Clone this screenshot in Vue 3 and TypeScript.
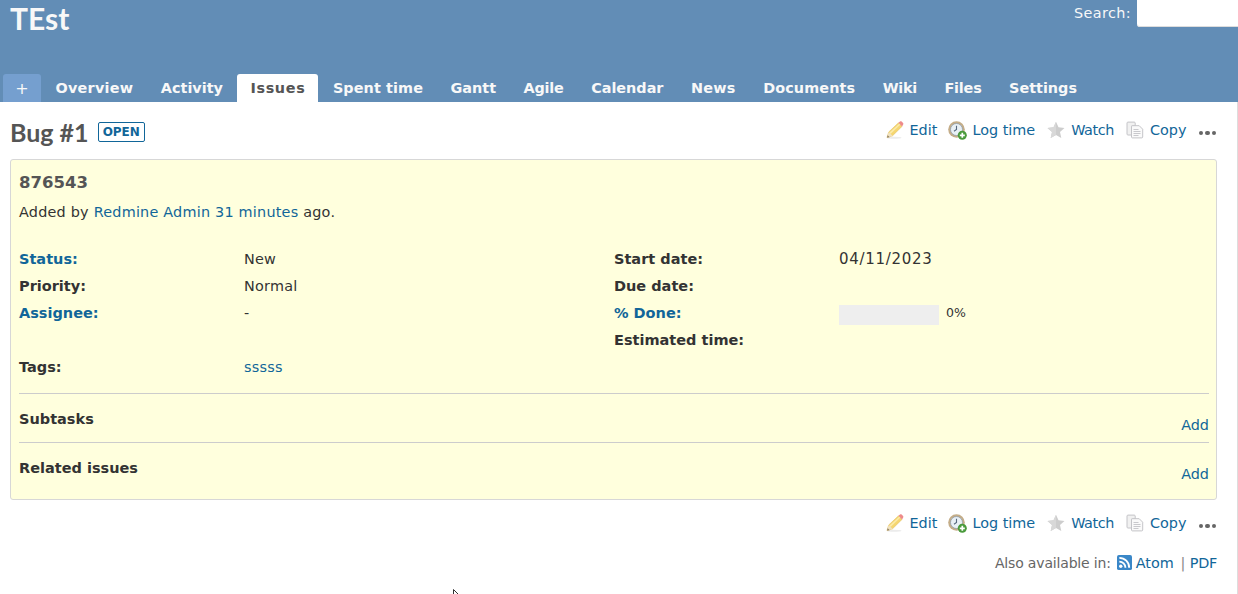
<script setup lang="ts">
const tabs = [
  { name: 'Overview', ls: 0.25 },
  { name: 'Activity', ls: 0 },
  { name: 'Issues', ls: 0.65 },
  { name: 'Spent time', ls: 0.1 },
  { name: 'Gantt', ls: 0 },
  { name: 'Agile', ls: -0.2 },
  { name: 'Calendar', ls: 0 },
  { name: 'News', ls: 0.25 },
  { name: 'Documents', ls: 0.11 },
  { name: 'Wiki', ls: -0.25 },
  { name: 'Files', ls: -0.2 },
  { name: 'Settings', ls: 0 },
]
const leftAttrs = [
  { label: 'Status:', value: 'New', labelLink: true, valueLink: false },
  { label: 'Priority:', value: 'Normal', labelLink: false, valueLink: false },
  { label: 'Assignee:', value: '-', labelLink: true, valueLink: false },
  { label: '', value: '', labelLink: false, valueLink: false },
  { label: 'Tags:', value: 'sssss', labelLink: false, valueLink: true },
]
const toolbars = ['top', 'bottom']
</script>

<template>
  <div class="page">
    <header class="header">
      <div class="top">
        <h1 class="title">TEst</h1>
        <div class="search">
          <label class="search-label">Search:</label>
          <span class="search-box"></span>
        </div>
      </div>
      <nav class="tabs">
        <a class="tab new">+</a>
        <a
          v-for="t in tabs"
          :key="t.name"
          class="tab"
          :class="{ selected: t.name === 'Issues' }"
          :style="{ letterSpacing: t.ls + 'px' }"
        >{{ t.name }}</a>
      </nav>
    </header>

    <main class="content">
      <template v-for="bar in toolbars" :key="bar">
        <div v-if="bar === 'top'" class="head-row">
          <div class="heading">
            <h2 class="bug">Bug #1</h2>
            <span class="badge">OPEN</span>
          </div>
          <div class="actions">
            <a class="action">
              <svg class="ic" viewBox="0 0 18 18"><ellipse cx="8" cy="16.800" rx="7.500" ry="1" fill="#ececec"/><path d="M1 16.500 2.700 11 12.500 1.800l3.500 3.600L6.500 14.800z" fill="#f5d670" stroke="#e3bf63" stroke-width=".6"/><path d="M3.500 11.500 13.500 2.500l1 1-10 9.500z" fill="#fbeaa8"/><path d="M12.500 1.800 14 .6c.5-.4 1.100-.4 1.600 0l1.500 1.500c.4.500.4 1.100 0 1.600L16 5.400z" fill="#ee8b8b"/><path d="M1 16.500 2.700 11l3.800 3.800z" fill="#f0e2c2"/><path d="M1 16.500 1.700 14.300l2 2z" fill="#8a7a60"/></svg>
              Edit
            </a>
            <a class="action">
              <svg class="ic clock" viewBox="0 0 19 19"><circle cx="8.500" cy="8.500" r="8.300" fill="#c4ad88"/><circle cx="8.500" cy="8.500" r="6" fill="#e8f0f6" stroke="#8798ab" stroke-width=".7"/><path d="M8.500 4.800v3.700L6 10.200" fill="none" stroke="#56687e" stroke-width="1.100"/><circle cx="14.300" cy="14.300" r="4.500" fill="#4a9a3c"/><path d="M14.300 11.800v5M11.800 14.300h5" stroke="#fff" stroke-width="1.700"/></svg>
              Log time
            </a>
            <a class="action watch">
              <svg class="ic" viewBox="0 0 18 18"><path d="M9 .8 11.500 6.300l6 .7-4.500 4 1.300 6L9 14l-5.300 3 1.300-6L.5 7l6-.7z" fill="#cdcdcd"/><path d="M9 .8V14l-5.300 3 1.300-6L.5 7l6-.7z" fill="#d8d8d8"/></svg>
              Watch
            </a>
            <a class="action">
              <svg class="ic" viewBox="0 0 18 18"><path d="M1 2c0-.5.400-.9.900-.9h6.400c.5 0 .9.400.9.900v3H5.500v9H1.900c-.5 0-.9-.4-.9-.9z" fill="#f1f1f1" stroke="#c4c4c8"/><path d="M5.500 5.600c0-.5.400-.9.900-.9h6.800l3.500 3.500v7.800c0 .5-.4.900-.9.900H6.400c-.5 0-.9-.4-.9-.9z" fill="#fafafa" stroke="#c4c4c8"/><path d="M7.500 8.500h5M7.500 10.500h7M7.500 12.500h7M7.500 14.500h5" stroke="#c9c9cd" stroke-width="1"/></svg>
              Copy
            </a>
            <span class="more"><i></i><i></i><i></i></span>
          </div>
        </div>

        <section v-if="bar === 'top'" class="issue">
          <h3 class="subject">876543</h3>
          <p class="author">Added by <a>Redmine Admin</a> <a>31 minutes</a> ago.</p>
          <div class="attrs">
            <div class="col">
              <div v-for="(a, i) in leftAttrs" :key="i" class="attr">
                <span class="lbl" :class="{ link: a.labelLink }">{{ a.label }}</span>
                <span class="val" :class="{ link: a.valueLink }">{{ a.value }}</span>
              </div>
            </div>
            <div class="col">
              <div class="attr"><span class="lbl">Start date:</span><span class="val date">04/11/2023</span></div>
              <div class="attr"><span class="lbl">Due date:</span><span class="val"></span></div>
              <div class="attr">
                <span class="lbl link">% Done:</span>
                <span class="val progress"><span class="bar"></span><span class="pct">0%</span></span>
              </div>
              <div class="attr"><span class="lbl">Estimated time:</span><span class="val"></span></div>
            </div>
          </div>
          <div class="related first">
            <span class="rel-title">Subtasks</span>
            <a class="add">Add</a>
          </div>
          <div class="related">
            <span class="rel-title">Related issues</span>
            <a class="add">Add</a>
          </div>
        </section>

        <div v-if="bar === 'bottom'" class="actions bottom">
          <a class="action">
            <svg class="ic" viewBox="0 0 18 18"><ellipse cx="8" cy="16.800" rx="7.500" ry="1" fill="#ececec"/><path d="M1 16.500 2.700 11 12.500 1.800l3.500 3.600L6.500 14.800z" fill="#f5d670" stroke="#e3bf63" stroke-width=".6"/><path d="M3.500 11.500 13.500 2.500l1 1-10 9.500z" fill="#fbeaa8"/><path d="M12.500 1.800 14 .6c.5-.4 1.100-.4 1.600 0l1.500 1.500c.4.500.4 1.100 0 1.600L16 5.400z" fill="#ee8b8b"/><path d="M1 16.500 2.700 11l3.800 3.800z" fill="#f0e2c2"/><path d="M1 16.500 1.700 14.300l2 2z" fill="#8a7a60"/></svg>
            Edit
          </a>
          <a class="action">
            <svg class="ic clock" viewBox="0 0 19 19"><circle cx="8.500" cy="8.500" r="8.300" fill="#c4ad88"/><circle cx="8.500" cy="8.500" r="6" fill="#e8f0f6" stroke="#8798ab" stroke-width=".7"/><path d="M8.500 4.800v3.700L6 10.200" fill="none" stroke="#56687e" stroke-width="1.100"/><circle cx="14.300" cy="14.300" r="4.500" fill="#4a9a3c"/><path d="M14.300 11.800v5M11.800 14.300h5" stroke="#fff" stroke-width="1.700"/></svg>
            Log time
          </a>
          <a class="action watch">
            <svg class="ic" viewBox="0 0 18 18"><path d="M9 .8 11.500 6.300l6 .7-4.500 4 1.300 6L9 14l-5.300 3 1.300-6L.5 7l6-.7z" fill="#cdcdcd"/><path d="M9 .8V14l-5.300 3 1.300-6L.5 7l6-.7z" fill="#d8d8d8"/></svg>
            Watch
          </a>
          <a class="action">
            <svg class="ic" viewBox="0 0 18 18"><path d="M1 2c0-.5.400-.9.900-.9h6.400c.5 0 .9.400.9.900v3H5.500v9H1.900c-.5 0-.9-.4-.9-.9z" fill="#f1f1f1" stroke="#c4c4c8"/><path d="M5.500 5.600c0-.5.400-.9.900-.9h6.800l3.500 3.500v7.800c0 .5-.4.900-.9.900H6.400c-.5 0-.9-.4-.9-.9z" fill="#fafafa" stroke="#c4c4c8"/><path d="M7.500 8.500h5M7.500 10.500h7M7.500 12.500h7M7.500 14.500h5" stroke="#c9c9cd" stroke-width="1"/></svg>
            Copy
          </a>
          <span class="more"><i></i><i></i><i></i></span>
        </div>
      </template>

      <p class="other">
        <span class="also">Also available in:</span>
        <svg class="rss" viewBox="0 0 16 16"><rect width="16" height="16" rx="2" fill="#3a87c8"/><circle cx="4" cy="12" r="1.800" fill="#fff"/><path d="M2.500 7a6.500 6.500 0 0 1 6.500 6.500M2.500 3a10.500 10.500 0 0 1 10.500 10.500" fill="none" stroke="#fff" stroke-width="2"/></svg>
        <a>Atom</a> <span class="sep">|</span> <a class="pdf">PDF</a>
      </p>
    </main>
    <svg class="cursor" viewBox="0 0 8 6"><path d="M.5.500V6M.5.500 6 6" fill="none" stroke="#333" stroke-width="1"/></svg>
  </div>
</template>

<style scoped>
.page {
  position: relative;
  width: 1238px;
  height: 594px;
  overflow: hidden;
  background: #fff;
  font-family: "DejaVu Sans", Verdana, sans-serif;
  font-size: 14.4px;
  color: #333;
}
a { color: #169; text-decoration: none; }
.link { color: #169; }
.header {
  height: 102px;
  background: #628db6;
  color: #f8f8f8;
  display: flex;
  flex-direction: column;
  justify-content: space-between;
}
.top {
  display: flex;
  justify-content: space-between;
  align-items: flex-start;
}
.title {
  margin: 0 0 0 10px;
  font-family: Lato, "Open Sans", sans-serif;
  font-size: 30px;
  font-weight: 700;
  line-height: 36px;
  color: #f8f8f8;
}
.search {
  display: flex;
  align-items: flex-start;
  gap: 6px;
}
.search-label { font-size: 14.4px; line-height: 26px; letter-spacing: .4px; }
.search-box {
  width: 101px;
  height: 27px;
  background: #fff;
  border-radius: 0 0 0 3px;
  box-shadow: inset 0 -1px 0 #ddd;
}
.tabs {
  display: flex;
  align-items: flex-end;
  padding-left: 3px;
  gap: 1.500px;
}
.tab {
  height: 28px;
  line-height: 29px;
  padding: 0 13px;
  font-size: 14.4px;
  font-weight: 700;
  color: #f8f8f8;
  border-radius: 3px 3px 0 0;
  white-space: nowrap;
}
.tab.new {
  width: 38px;
  padding: 0;
  text-align: center;
  background: #759fcf;
  font-weight: 400;
  font-size: 16px;
}
.tab.selected { background: #fff; color: #555; }
.content {
  height: 492px;
  box-sizing: border-box;
  padding: 0 20px 0 10px;
  border-right: 1px solid #ddd;
}
.head-row {
  height: 57px;
  display: flex;
  justify-content: space-between;
  align-items: flex-start;
}
.heading {
  display: flex;
  align-items: center;
  gap: 9px;
  height: 30px;
  margin-top: 15px;
}
.bug {
  margin: 0;
  font-family: Lato, "Open Sans", sans-serif;
  font-size: 25px;
  font-weight: 700;
  color: #555;
}
.badge {
  height: 18px;
  line-height: 18px;
  padding: 0 4px;
  border: 1px solid #169;
  border-radius: 2px;
  color: #169;
  font-size: 12px;
  font-weight: 700;
  box-sizing: content-box;
}
.actions {
  display: flex;
  align-items: center;
  height: 20px;
  margin-top: 18px;
  margin-right: 1px;
}
.action {
  display: flex;
  align-items: center;
  gap: 6px;
  margin-right: 12px;
  white-space: nowrap;
}
.action:first-child { margin-right: 11px; }
.watch { letter-spacing: -.4px; }
.ic { width: 18px; height: 18px; flex: none; }
.clock { width: 19px; height: 19px; margin-right: -1px; }
.more { display: flex; gap: 2px; margin: 6px 0 0 0; }
.more i { width: 4.500px; height: 4.500px; border-radius: 50%; background: #666; }
.issue {
  height: 341px;
  box-sizing: border-box;
  background: #ffd;
  border: 1px solid #d7d7d7;
  border-radius: 3px;
  padding: 0 7px 0 8px;
}
.subject {
  margin: 0;
  padding-top: 12px;
  font-size: 16.500px;
  line-height: 22px;
  font-weight: 700;
  color: #555;
}
.author { margin: 8px 0 0; line-height: 20px; letter-spacing: .22px; }
.attrs {
  display: grid;
  grid-template-columns: 595px 1fr;
  margin-top: 25px;
}
.attr {
  display: grid;
  grid-template-columns: 225px 1fr;
  height: 27px;
  line-height: 25px;
}
.lbl { font-weight: 700; font-size: 14.500px; }
.val { letter-spacing: .25px; }
.date { font-size: 15px; letter-spacing: .7px; }
.progress { display: flex; align-items: center; gap: 7px; letter-spacing: 0; }
.bar { width: 100px; height: 20px; background: #eee; display: block; }
.pct { font-size: 12.500px; line-height: 14px; margin-top: -4px; }
.related {
  position: relative;
  border-top: 1px solid #ccc;
  height: 48px;
}
.related.first { margin-top: 11px; }
.rel-title {
  display: block;
  padding-top: 15px;
  line-height: 21px;
  font-weight: 700;
  font-size: 14.500px;
}
.add {
  position: absolute;
  right: 0;
  top: 21px;
  line-height: 20px;
}
.bottom {
  justify-content: flex-end;
  margin-top: 13px;
}
.other {
  margin: 20px 0 0;
  text-align: right;
  color: #666;
  line-height: 20px;
}
.also { font-size: 14px; letter-spacing: -.17px; }
.rss { width: 15px; height: 15px; vertical-align: -2px; margin: 0 4px 0 6px; }
.sep { color: #888; margin: 0 0 0 2px; }
.pdf { letter-spacing: -.3px; }
.cursor {
  position: absolute;
  left: 453px;
  top: 589px;
  width: 8px;
  height: 6px;
}
</style>
